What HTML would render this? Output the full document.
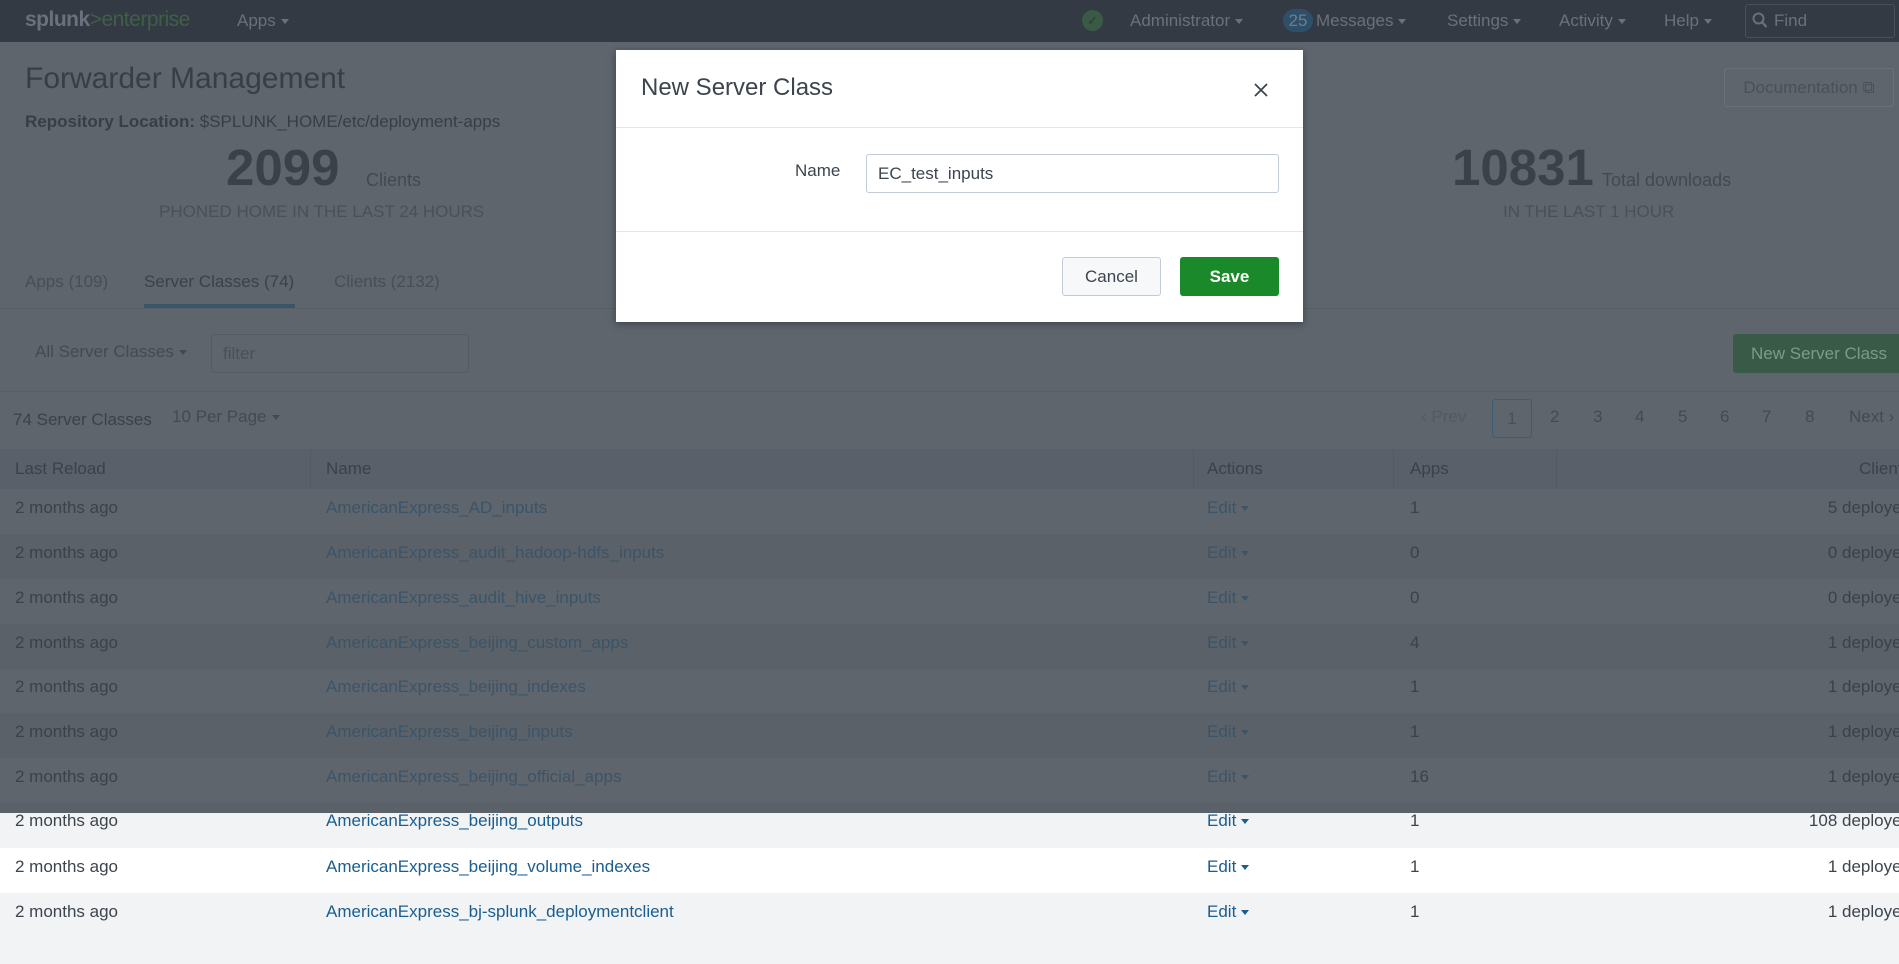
<!DOCTYPE html>
<html><head><meta charset="utf-8">
<style>
*{margin:0;padding:0;box-sizing:border-box}
html,body{width:1899px;height:964px;overflow:hidden;background:#f2f3f5;font-family:"Liberation Sans",sans-serif;position:relative}
.a{position:absolute;white-space:nowrap}
.nav{position:absolute;left:0;top:0;width:1899px;height:42px;background:#333a44}
.nt{position:absolute;top:11px;font-size:17px;color:#6b717a}
.car{display:inline-block;width:0;height:0;border-left:4px solid transparent;border-right:4px solid transparent;border-top:5px solid currentColor;vertical-align:middle;margin-left:5px}
.ov{position:absolute;left:0;top:42px;width:1899px;height:771px;background:#5f656d}
.row{position:absolute;left:0;width:1899px;height:45px}
.cell{position:absolute;font-size:17px;top:12px}
</style></head><body>

<div class="row" style="top:803px;height:45px;background:#f2f3f5"></div>
<div class="row" style="top:848px;background:#ffffff"></div>
<div class="row" style="top:893px;background:#f2f3f5"></div>
<div class="cell a" style="left:15px;top:811px;color:#3c444d">2 months ago</div>
<div class="cell a" style="left:326px;top:811px;color:#1a5d8f">AmericanExpress_beijing_outputs</div>
<div class="cell a" style="left:1207px;top:811px;color:#1a5d8f">Edit<span class="car"></span></div>
<div class="cell a" style="left:1410px;top:811px;color:#3c444d">1</div>
<div class="cell a" style="right:-12px;top:811px;color:#3c444d">108 deployed</div>
<div class="cell a" style="left:15px;top:857px;color:#3c444d">2 months ago</div>
<div class="cell a" style="left:326px;top:857px;color:#1a5d8f">AmericanExpress_beijing_volume_indexes</div>
<div class="cell a" style="left:1207px;top:857px;color:#1a5d8f">Edit<span class="car"></span></div>
<div class="cell a" style="left:1410px;top:857px;color:#3c444d">1</div>
<div class="cell a" style="right:-12px;top:857px;color:#3c444d">1 deployed</div>
<div class="cell a" style="left:15px;top:902px;color:#3c444d">2 months ago</div>
<div class="cell a" style="left:326px;top:902px;color:#1a5d8f">AmericanExpress_bj-splunk_deploymentclient</div>
<div class="cell a" style="left:1207px;top:902px;color:#1a5d8f">Edit<span class="car"></span></div>
<div class="cell a" style="left:1410px;top:902px;color:#3c444d">1</div>
<div class="cell a" style="right:-12px;top:902px;color:#3c444d">1 deployed</div>

<div class="ov">
  <div class="a" style="left:25px;top:20px;font-size:30px;color:#383e46">Forwarder Management</div>
  <div class="a" style="left:25px;top:70px;font-size:17px;color:#383e46"><b>Repository Location:</b> $SPLUNK_HOME/etc/deployment-apps</div>
  <div class="a" style="left:1724px;top:26px;width:170px;height:39px;border:1px solid #6b7179;border-radius:3px;font-size:17px;color:#4a5058;text-align:center;line-height:37px">Documentation ⧉</div>
  <div class="a" style="left:226px;top:96px;font-size:51px;font-weight:bold;color:#3b4149">2099</div>
  <div class="a" style="left:366px;top:128px;font-size:18px;color:#434951">Clients</div>
  <div class="a" style="left:159px;top:160px;font-size:17px;color:#4a5058">PHONED HOME IN THE LAST 24 HOURS</div>
  <div class="a" style="left:1452px;top:96px;font-size:51px;font-weight:bold;color:#3b4149">10831</div>
  <div class="a" style="left:1602px;top:128px;font-size:18px;color:#434951">Total downloads</div>
  <div class="a" style="left:1503px;top:160px;font-size:17px;color:#4a5058">IN THE LAST 1 HOUR</div>
  <div class="a" style="left:0;top:266px;width:1899px;height:1px;background:#585e66"></div>
  <div class="a" style="left:25px;top:230px;font-size:17px;color:#484e56">Apps (109)</div>
  <div class="a" style="left:144px;top:230px;font-size:17px;color:#3b4149">Server Classes (74)</div>
  <div class="a" style="left:334px;top:230px;font-size:17px;color:#484e56">Clients (2132)</div>
  <div class="a" style="left:144px;top:262px;width:151px;height:4px;background:#3a5468"></div>
  <div class="a" style="left:35px;top:300px;font-size:17px;color:#444a52">All Server Classes<span class="car"></span></div>
  <div class="a" style="left:211px;top:292px;width:258px;height:39px;border:1px solid #555b63;border-radius:3px;font-size:17px;color:#4a5058;padding:9px 11px">filter</div>
  <div class="a" style="left:1733px;top:292px;width:170px;height:39px;background:#3a5a48;border-radius:3px;font-size:17px;color:#7d9a88;line-height:39px;padding-left:18px">New Server Class</div>
  <div class="a" style="left:0;top:349px;width:1899px;height:1px;background:#585e66"></div>
  <div class="a" style="left:13px;top:368px;font-size:17px;color:#3b4149">74 Server Classes</div>
  <div class="a" style="left:172px;top:365px;font-size:17px;color:#444a52">10 Per Page<span class="car"></span></div>
  <div class="a" style="left:1421px;top:365px;font-size:17px;color:#545a62">‹ Prev</div>
  <div class="a" style="left:1492px;top:357px;width:40px;height:39px;border:1px solid #3d5d75;border-radius:3px;font-size:17px;color:#4a5058;text-align:center;line-height:37px">1</div>
  <div class="a" style="left:1550px;top:365px;font-size:17px;color:#444a52">2</div>
  <div class="a" style="left:1593px;top:365px;font-size:17px;color:#444a52">3</div>
  <div class="a" style="left:1635px;top:365px;font-size:17px;color:#444a52">4</div>
  <div class="a" style="left:1678px;top:365px;font-size:17px;color:#444a52">5</div>
  <div class="a" style="left:1720px;top:365px;font-size:17px;color:#444a52">6</div>
  <div class="a" style="left:1762px;top:365px;font-size:17px;color:#444a52">7</div>
  <div class="a" style="left:1805px;top:365px;font-size:17px;color:#444a52">8</div>
  <div class="a" style="left:1849px;top:365px;font-size:17px;color:#444a52">Next ›</div>
  <div class="a" style="left:0;top:407px;width:1899px;height:40px;background:#59606a"></div>
  <div class="a" style="left:310px;top:407px;width:1px;height:40px;background:#535a62"></div>
  <div class="a" style="left:1193px;top:407px;width:1px;height:40px;background:#535a62"></div>
  <div class="a" style="left:1393px;top:407px;width:1px;height:40px;background:#535a62"></div>
  <div class="a" style="left:1556px;top:407px;width:1px;height:40px;background:#535a62"></div>
  <div class="a" style="left:15px;top:417px;font-size:17px;color:#3b4149">Last Reload</div>
  <div class="a" style="left:326px;top:417px;font-size:17px;color:#3b4149">Name</div>
  <div class="a" style="left:1207px;top:417px;font-size:17px;color:#3b4149">Actions</div>
  <div class="a" style="left:1410px;top:417px;font-size:17px;color:#3b4149">Apps</div>
  <div class="a" style="right:-12px;top:417px;font-size:17px;color:#3b4149">Clients</div>
  <div class="a" style="left:0;top:492px;width:1899px;height:45px;background:#5b6169"></div>
  <div class="a" style="left:0;top:582px;width:1899px;height:45px;background:#5b6169"></div>
  <div class="a" style="left:0;top:671px;width:1899px;height:45px;background:#5b6169"></div>
  <div class="a" style="left:0;top:761px;width:1899px;height:10px;background:#5b6169"></div>

  <div class="cell a" style="left:15px;top:456px;color:#3b4149">2 months ago</div>
  <div class="cell a" style="left:326px;top:456px;color:#3b5468">AmericanExpress_AD_inputs</div>
  <div class="cell a" style="left:1207px;top:456px;color:#3b5468">Edit<span class="car"></span></div>
  <div class="cell a" style="left:1410px;top:456px;color:#3b4149">1</div>
  <div class="cell a" style="right:-12px;top:456px;color:#3b4149">5 deployed</div>

  <div class="cell a" style="left:15px;top:501px;color:#3b4149">2 months ago</div>
  <div class="cell a" style="left:326px;top:501px;color:#3b5468">AmericanExpress_audit_hadoop-hdfs_inputs</div>
  <div class="cell a" style="left:1207px;top:501px;color:#3b5468">Edit<span class="car"></span></div>
  <div class="cell a" style="left:1410px;top:501px;color:#3b4149">0</div>
  <div class="cell a" style="right:-12px;top:501px;color:#3b4149">0 deployed</div>

  <div class="cell a" style="left:15px;top:546px;color:#3b4149">2 months ago</div>
  <div class="cell a" style="left:326px;top:546px;color:#3b5468">AmericanExpress_audit_hive_inputs</div>
  <div class="cell a" style="left:1207px;top:546px;color:#3b5468">Edit<span class="car"></span></div>
  <div class="cell a" style="left:1410px;top:546px;color:#3b4149">0</div>
  <div class="cell a" style="right:-12px;top:546px;color:#3b4149">0 deployed</div>

  <div class="cell a" style="left:15px;top:591px;color:#3b4149">2 months ago</div>
  <div class="cell a" style="left:326px;top:591px;color:#3b5468">AmericanExpress_beijing_custom_apps</div>
  <div class="cell a" style="left:1207px;top:591px;color:#3b5468">Edit<span class="car"></span></div>
  <div class="cell a" style="left:1410px;top:591px;color:#3b4149">4</div>
  <div class="cell a" style="right:-12px;top:591px;color:#3b4149">1 deployed</div>

  <div class="cell a" style="left:15px;top:635px;color:#3b4149">2 months ago</div>
  <div class="cell a" style="left:326px;top:635px;color:#3b5468">AmericanExpress_beijing_indexes</div>
  <div class="cell a" style="left:1207px;top:635px;color:#3b5468">Edit<span class="car"></span></div>
  <div class="cell a" style="left:1410px;top:635px;color:#3b4149">1</div>
  <div class="cell a" style="right:-12px;top:635px;color:#3b4149">1 deployed</div>

  <div class="cell a" style="left:15px;top:680px;color:#3b4149">2 months ago</div>
  <div class="cell a" style="left:326px;top:680px;color:#3b5468">AmericanExpress_beijing_inputs</div>
  <div class="cell a" style="left:1207px;top:680px;color:#3b5468">Edit<span class="car"></span></div>
  <div class="cell a" style="left:1410px;top:680px;color:#3b4149">1</div>
  <div class="cell a" style="right:-12px;top:680px;color:#3b4149">1 deployed</div>

  <div class="cell a" style="left:15px;top:725px;color:#3b4149">2 months ago</div>
  <div class="cell a" style="left:326px;top:725px;color:#3b5468">AmericanExpress_beijing_official_apps</div>
  <div class="cell a" style="left:1207px;top:725px;color:#3b5468">Edit<span class="car"></span></div>
  <div class="cell a" style="left:1410px;top:725px;color:#3b4149">16</div>
  <div class="cell a" style="right:-12px;top:725px;color:#3b4149">1 deployed</div>
</div>

<div class="nav">
  <div class="a" style="left:25px;top:8px;font-size:21px;letter-spacing:-0.5px"><span style="color:#6b717a;font-weight:bold">splunk</span><span style="color:#3f5f48">&gt;enterprise</span></div>
  <div class="nt" style="left:237px">Apps<span class="car"></span></div>
  <div class="a" style="left:1082px;top:10px;width:21px;height:21px;border-radius:50%;background:#3a5a46;color:#2c3a30;font-size:13px;text-align:center;line-height:21px">✓</div>
  <div class="nt" style="left:1130px">Administrator<span class="car"></span></div>
  <div class="a" style="left:1283px;top:9px;width:30px;height:23px;border-radius:12px;background:#2f4f68;color:#6b7f90;font-size:17px;text-align:center;line-height:23px">25</div>
  <div class="nt" style="left:1316px">Messages<span class="car"></span></div>
  <div class="nt" style="left:1447px">Settings<span class="car"></span></div>
  <div class="nt" style="left:1559px">Activity<span class="car"></span></div>
  <div class="nt" style="left:1664px">Help<span class="car"></span></div>
  <div class="a" style="left:1745px;top:4px;width:150px;height:34px;border:1px solid #4a5059;border-radius:3px"></div>
  <svg class="a" style="left:1752px;top:12px" width="16" height="17" viewBox="0 0 16 17"><circle cx="6.5" cy="6.5" r="5" fill="none" stroke="#6b717a" stroke-width="2"/><path d="M10 10l4.5 5" stroke="#6b717a" stroke-width="2.2"/></svg>
  <div class="nt" style="left:1774px">Find</div>
</div>

<div class="a" style="left:616px;top:50px;width:687px;height:272px;background:#fff;box-shadow:0 2px 8px rgba(0,0,0,0.35)">
  <div class="a" style="left:25px;top:24px;font-size:24px;color:#3c444d">New Server Class</div>
  <svg class="a" style="left:638px;top:33px" width="14" height="14" viewBox="0 0 14 14"><path d="M1 1L13 13M13 1L1 13" stroke="#3c444d" stroke-width="1.8"/></svg>
  <div class="a" style="left:0;top:77px;width:687px;height:1px;background:#e1e6eb"></div>
  <div class="a" style="left:179px;top:111px;font-size:17px;color:#3c444d">Name</div>
  <div class="a" style="left:250px;top:104px;width:413px;height:39px;border:1px solid #c3cbd4;border-radius:3px;font-size:17px;color:#3c444d;padding:9px 11px">EC_test_inputs</div>
  <div class="a" style="left:0;top:181px;width:687px;height:1px;background:#e1e6eb"></div>
  <div class="a" style="left:446px;top:207px;width:99px;height:39px;background:#f7f8fa;border:1px solid #c3cbd4;border-radius:3px;font-size:17px;color:#3c444d;text-align:center;line-height:37px">Cancel</div>
  <div class="a" style="left:564px;top:207px;width:99px;height:39px;background:#1a8929;border-radius:3px;font-size:17px;color:#fff;font-weight:bold;text-align:center;line-height:39px">Save</div>
</div>
</body></html>
